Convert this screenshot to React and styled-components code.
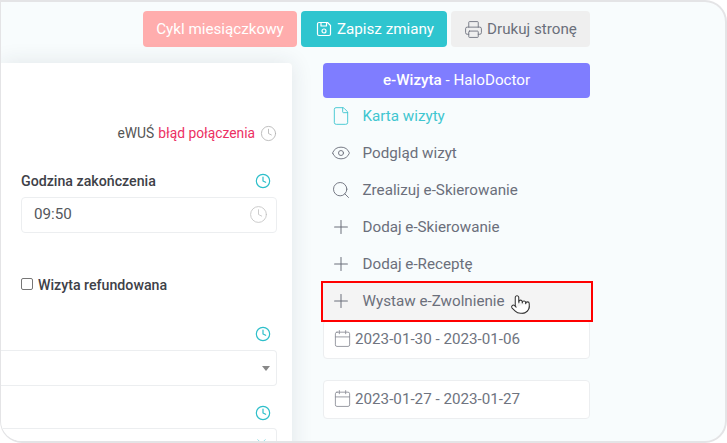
import React from "react";
import styled, { createGlobalStyle } from "styled-components";
import { Clock, Eye, File, Search, Plus, Calendar, Printer, ChevronDown, Pointer } from "lucide-react";

const Global = createGlobalStyle`
  html, body { margin: 0; padding: 0; background: #fff; }
  body { font-family: Roboto, "Liberation Sans", sans-serif; }
  * { box-sizing: border-box; }
`;

const Frame = styled.div`
  width: 727px;
  height: 443px;
  border: 2px solid #e4e4e6;
  border-left-width: 1px;
  border-radius: 0 22px 22px 22px;
  background: #f8fcfd;
  overflow: hidden;
  display: flex;
  flex-direction: column;
  padding-top: 9px;
`;

const Toolbar = styled.div`
  display: flex;
  justify-content: flex-end;
  gap: 4px;
  padding-right: 135px;
  height: 36px;
  flex: none;
`;

const Btn = styled.div`
  height: 36px;
  width: ${p => p.$w}px;
  border-radius: 4px;
  background: ${p => p.$bg};
  color: ${p => p.$fg};
  display: flex;
  align-items: center;
  justify-content: center;
  gap: ${p => p.$gap || 0}px;
  padding-left: ${p => p.$pl || 0}px;
  font-size: 15.2px;
  svg { flex: none; }
`;

const Body = styled.div`
  display: flex;
  margin-top: 16px;
  flex: 1;
  min-height: 0;
`;

const Card = styled.div`
  width: 291px;
  height: 400px;
  flex: none;
  background: #fff;
  border-radius: 0 4px 4px 0;
  box-shadow: 0 0 22px rgba(40, 50, 60, 0.11);
  padding: 61px 15px 0 20px;
`;

const Status = styled.div`
  display: flex;
  justify-content: flex-end;
  align-items: center;
  gap: 4px;
  font-size: 13.8px;
  line-height: 18px;
  color: #555;
  span { color: #ec2f63; margin-right: 1px; }
  svg { color: #b4b4b4; }
`;

const LabelRow = styled.div`
  display: flex;
  justify-content: ${p => (p.$end ? "flex-end" : "space-between")};
  align-items: center;
  height: 18px;
  margin-top: ${p => p.$mt}px;
  padding-right: 6px;
  font-size: 14.2px;
  font-weight: 500;
  color: #3e4148;
  svg { color: #2ebfca; }
`;

const Field = styled.div`
  height: 36px;
  margin-top: ${p => p.$mt ?? 7}px;
  margin-left: ${p => p.$ml || 0}px;
  border: 1px solid #eceef0;
  border-left-width: ${p => (p.$open ? 0 : 1)}px;
  border-radius: ${p => (p.$open ? "0 4px 4px 0" : "4px")};
  display: flex;
  align-items: center;
  justify-content: space-between;
  padding: 0 8px 2px 12px;
  font-size: 15.2px;
  color: #54575c;
  svg { color: #c4c4c4; }
`;

const CheckRow = styled.label`
  display: flex;
  align-items: center;
  gap: 5px;
  margin-top: 43px;
  font-size: 14.2px;
  line-height: 18px;
  font-weight: 500;
  color: #3e4148;
`;

const Box = styled.span`
  width: 12px;
  height: 12px;
  border: 1px solid #767676;
  border-radius: 2px;
  background: #fff;
  margin-top: -2px;
`;

const Caret = styled.i`
  width: 0;
  height: 0;
  border-left: 4px solid transparent;
  border-right: 4px solid transparent;
  border-top: 5px solid #888;
  margin: 2px -2px 0 0;
`;

const PeekChevron = styled(ChevronDown)`
  align-self: flex-start;
  margin-top: 5px;
  margin-right: -1px;
  && { color: #8fdde3; }
`;

const Side = styled.div`
  width: 267px;
  margin-left: 31px;
  flex: none;
  display: flex;
  flex-direction: column;
`;

const Banner = styled.div`
  height: 35px;
  padding-bottom: 2px;
  border-radius: 4px;
  background: #7f7dff;
  color: #fff;
  font-size: 15.2px;
  display: flex;
  align-items: center;
  justify-content: center;
  flex: none;
  b { font-weight: 500; }
  white-space: pre;
`;

const Menu = styled.div`
  display: flex;
  flex-direction: column;
`;

const Row = styled.div`
  position: relative;
  height: 37px;
  flex: none;
  display: flex;
  align-items: center;
  gap: 10.5px;
  padding: 0 0 2px 7px;
  margin-right: ${p => (p.$hl ? -1 : 0)}px;
  font-size: 15.2px;
  color: ${p => (p.$active ? "#40c6d0" : "#6b6f7b")};
  background: ${p => (p.$hl ? "#f4f4f4" : "transparent")};
  outline: ${p => (p.$hl ? "2px solid #f00" : "none")};
  z-index: ${p => (p.$hl ? 1 : 0)};
`;

const IconSlot = styled.span`
  width: 22px;
  flex: none;
  display: flex;
  align-items: center;
  justify-content: center;
`;

const Cursor = styled.span`
  position: absolute;
  left: 187px;
  top: 11px;
  display: block;
  line-height: 0;
`;

const DateBox = styled.div`
  height: 39px;
  flex: none;
  margin-top: ${p => p.$mt}px;
  background: #fff;
  border: 1px solid #eceef0;
  border-radius: 4px;
  display: flex;
  align-items: center;
  gap: 3px;
  padding: 0 0 2px 9px;
  font-size: 15.2px;
  color: #6f7480;
  svg { color: #8a8d96; }
`;

const SaveIcon = () => (
  <svg width="16" height="16" viewBox="0 0 16 16" fill="none" stroke="currentColor" strokeWidth="1.2" strokeLinejoin="round">
    <path d="M3 1.5h8.5L14.5 4.5V13a1.5 1.5 0 0 1-1.5 1.5H3A1.5 1.5 0 0 1 1.5 13V3A1.5 1.5 0 0 1 3 1.5z" />
    <path d="M5 1.5V5h5.5V1.5" />
    <circle cx="8" cy="10" r="2" />
  </svg>
);

const menu = [
  { icon: File, size: 20, label: "Karta wizyty", active: true },
  { icon: Eye, size: 20, label: "Podgląd wizyt" },
  { icon: Search, size: 20, label: "Zrealizuj e-Skierowanie" },
  { icon: Plus, size: 22, label: "Dodaj e-Skierowanie" },
  { icon: Plus, size: 22, label: "Dodaj e-Receptę" },
  { icon: Plus, size: 22, label: "Wystaw e-Zwolnienie", hl: true },
];

export default function App() {
  return (
    <>
      <Global />
      <Frame>
        <Toolbar>
          <Btn $w={154} $bg="#ffadad" $fg="#fff">Cykl miesiączkowy</Btn>
          <Btn $w={146} $bg="#2fc5cf" $fg="#fff" $gap={5} $pl={2}><SaveIcon />Zapisz zmiany</Btn>
          <Btn $w={139} $bg="#efefef" $fg="#6b6f7b" $gap={4}><Printer size={19} strokeWidth={1.1} />Drukuj stronę</Btn>
        </Toolbar>
        <Body>
          <Card>
            <Status>eWUŚ <span>błąd połączenia</span><Clock size={17} strokeWidth={1.2} /></Status>
            <LabelRow $mt={30}>Godzina zakończenia<Clock size={16} strokeWidth={1.8} /></LabelRow>
            <Field>09:50<Clock size={19} strokeWidth={1.1} /></Field>
            <CheckRow><Box />Wizyta refundowana</CheckRow>
            <LabelRow $mt={31} $end><Clock size={16} strokeWidth={1.8} /></LabelRow>
            <Field $ml={-20} $open><span /><Caret /></Field>
            <LabelRow $mt={18} $end><Clock size={16} strokeWidth={1.8} /></LabelRow>
            <Field $ml={-20} $mt={6} $open><span /><PeekChevron size={15} strokeWidth={1.5} /></Field>
          </Card>
          <Side>
            <Banner><b>e-Wizyta</b> - HaloDoctor</Banner>
            <Menu>
              {menu.map(({ icon: Icon, size, label, active, hl }) => (
                <Row key={label} $active={active} $hl={hl}>
                  <IconSlot><Icon size={size} strokeWidth={1.1} /></IconSlot>
                  {label}
                  {hl && <Cursor><Pointer size={21} strokeWidth={1.2} fill="#fff" color="#333" /></Cursor>}
                </Row>
              ))}
            </Menu>
            <DateBox $mt={0}><Calendar size={19} strokeWidth={1.1} />2023-01-30 - 2023-01-06</DateBox>
            <DateBox $mt={21}><Calendar size={19} strokeWidth={1.1} />2023-01-27 - 2023-01-27</DateBox>
          </Side>
        </Body>
      </Frame>
    </>
  );
}
